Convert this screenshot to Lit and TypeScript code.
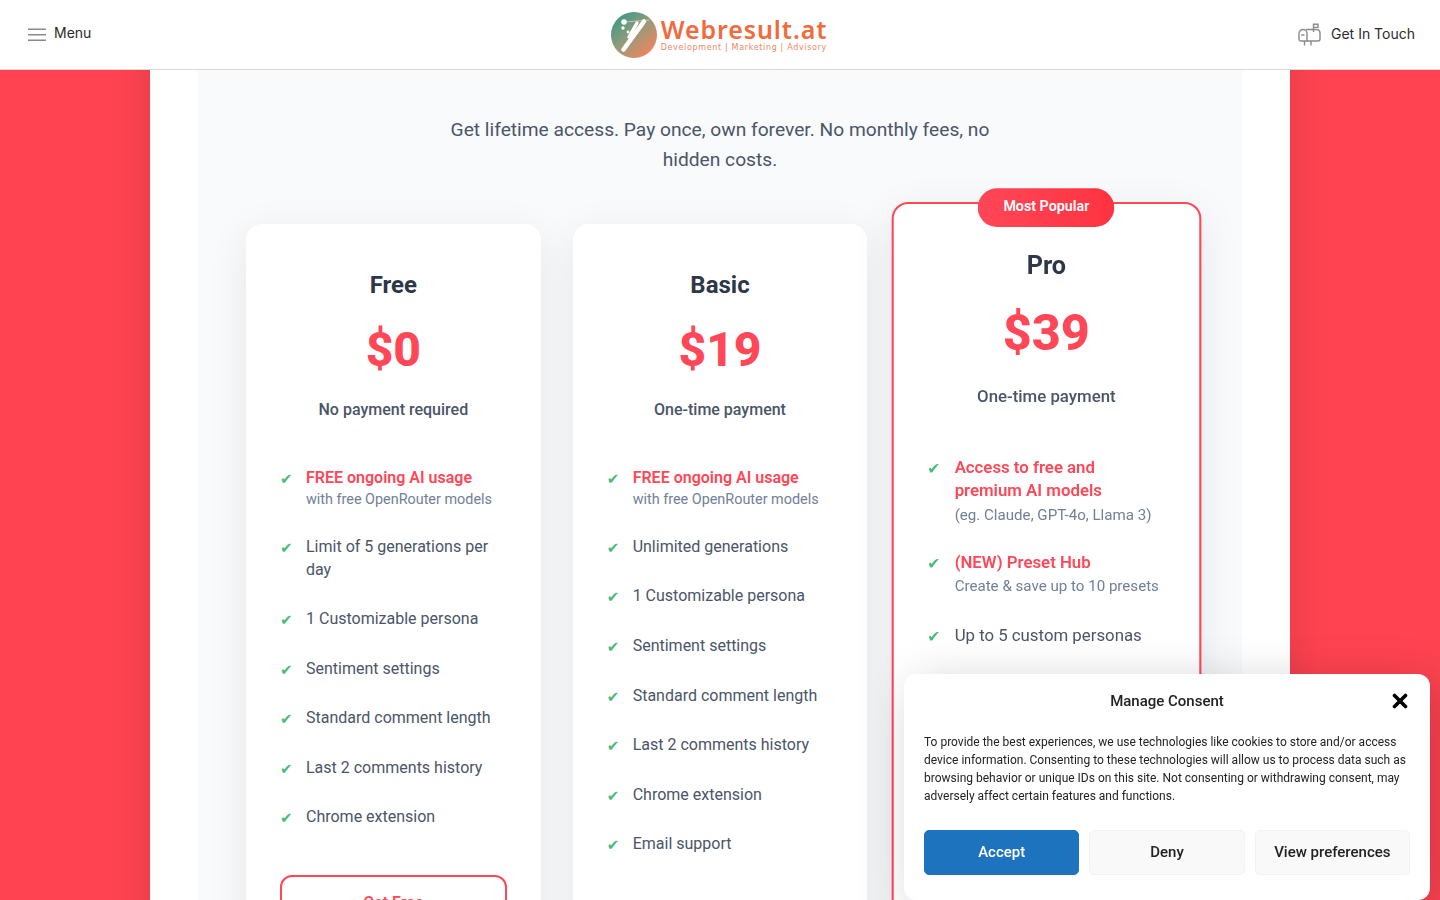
import { LitElement, html, css } from "lit";
import { customElement } from "lit/decorators.js";

type Feat = { t: string; hl?: boolean; sub?: string };
type Plan = { name: string; price: string; note: string; cta: string; popular?: boolean; feats: Feat[] };

const PLANS: Plan[] = [
  {
    name: "Free", price: "$0", note: "No payment required", cta: "Get Free",
    feats: [
      { t: "FREE ongoing AI usage", hl: true, sub: "with free OpenRouter models" },
      { t: "Limit of 5 generations per day" },
      { t: "1 Customizable persona" },
      { t: "Sentiment settings" },
      { t: "Standard comment length" },
      { t: "Last 2 comments history" },
      { t: "Chrome extension" },
    ],
  },
  {
    name: "Basic", price: "$19", note: "One-time payment", cta: "Get Basic",
    feats: [
      { t: "FREE ongoing AI usage", hl: true, sub: "with free OpenRouter models" },
      { t: "Unlimited generations" },
      { t: "1 Customizable persona" },
      { t: "Sentiment settings" },
      { t: "Standard comment length" },
      { t: "Last 2 comments history" },
      { t: "Chrome extension" },
      { t: "Email support" },
    ],
  },
  {
    name: "Pro", price: "$39", note: "One-time payment", cta: "Get Pro", popular: true,
    feats: [
      { t: "Access to free and premium AI models", hl: true, sub: "(eg. Claude, GPT-4o, Llama 3)" },
      { t: "(NEW) Preset Hub", hl: true, sub: "Create & save up to 10 presets" },
      { t: "Up to 5 custom personas" },
      { t: "Sentiment settings" },
      { t: "Standard comment length" },
      { t: "Last 5 comments history" },
      { t: "Chrome extension" },
    ],
  },
];

@customElement("app-root")
export class AppRoot extends LitElement {
  static styles = css`
    :host {
      display: block;
      position: relative;
      width: 1440px;
      height: 900px;
      overflow: hidden;
      background: #ff4351;
      font-family: Roboto, "Liberation Sans", sans-serif;
    }
    * { box-sizing: border-box; }
    .header {
      position: absolute;
      inset: 0 0 auto 0;
      z-index: 5;
      height: 70px;
      background: #fff;
      border-bottom: 1px solid #d9d9d9;
      display: grid;
      grid-template-columns: 1fr auto 1fr;
      align-items: center;
      padding: 0 25px 0 28px;
      font-family: Inter, Roboto, sans-serif;
      font-size: 14px;
      color: #2b2b2b;
    }
    .menu { display: flex; align-items: center; gap: 8px; margin-top: -5px; }
    .menu svg { margin-top: 5px; }
    .touch { display: flex; align-items: center; gap: 10px; justify-content: flex-end; margin-top: -1px; }
    .touch span { margin-top: -2px; }
    .logo { display: flex; align-items: center; gap: 4px; margin-left: -5px; }
    .wordmark { display: flex; flex-direction: column; margin-top: -1px; }
    .brand {
      font-family: "Noto Sans", "DejaVu Sans", sans-serif;
      font-weight: 600;
      font-size: 25px;
      line-height: 27px;
      letter-spacing: 0.9px;
      color: #ef6c3e;
    }
    .tag {
      font-family: "DejaVu Sans", sans-serif;
      font-size: 8px;
      line-height: 10px;
      letter-spacing: 0.66px;
      color: #ee8763;
    }
    .wrap {
      width: 1140px;
      min-height: 900px;
      margin: 0 auto;
      padding: 70px 48px 0;
      background: #fff;
      box-shadow: 0 0 40px rgba(0, 0, 0, 0.12);
    }
    .section {
      background: #f8fafc;
      padding: 45px 48px 60px;
    }
    .lead {
      max-width: 600px;
      margin: 0 auto 49px;
      text-align: center;
      font-size: 19.2px;
      line-height: 30px;
      color: #4a5568;
    }
    .grid {
      display: grid;
      grid-template-columns: repeat(3, 1fr);
      gap: 32px;
    }
    .card {
      position: relative;
      background: #fff;
      border-radius: 16px;
      padding: 47px 34px 34px;
      box-shadow: 0 10px 40px rgba(0, 0, 0, 0.08);
      height: 884px;
    }
    .card.popular {
      border: 2px solid #ff4757;
      padding: 45px 32px 32px;
      transform: scale(1.05);
    }
    .badge {
      position: absolute;
      top: -15.5px;
      left: 50%;
      transform: translateX(-50%);
      width: 130px;
      height: 37px;
      padding-bottom: 2px;
      border-radius: 19px;
      background: linear-gradient(90deg, #ff4757, #ff3341);
      color: #fff;
      font-size: 13.6px;
      font-weight: 600;
      display: flex;
      align-items: center;
      justify-content: center;
    }
    h3 {
      margin: 0;
      text-align: center;
      font-size: 24px;
      line-height: 28px;
      font-weight: 700;
      color: #2d3748;
    }
    .price {
      margin-top: 23px;
      text-align: center;
      font-size: 48px;
      line-height: 56px;
      font-weight: 800;
      color: #ff4757;
    }
    .popular .price { margin-top: 22px; }
    .note {
      margin-top: 20px;
      text-align: center;
      font-size: 16px;
      line-height: 24px;
      font-weight: 500;
      color: #4a5568;
    }
    .popular .note { margin-top: 21px; }
    ul { list-style: none; margin: 32px 0 0; padding: 0; }
    .popular ul { margin-top: 31px; }
    li {
      display: grid;
      grid-template-columns: 26px 1fr;
      padding: 13.4px 0;
      font-size: 16px;
      line-height: 22.8px;
      color: #4a5568;
    }
    .check {
      color: #48bb78;
      font-family: "DejaVu Sans", sans-serif;
      font-size: 15px;
      line-height: 24px;
      height: 22.8px;
    }
    .hl { display: block; color: #ff4757; font-weight: 600; line-height: 22px; }
    .sub { display: block; margin-top: 2.8px; font-size: 14.4px; line-height: 16.8px; color: #718096; }
    .popular .sub { margin-top: 5.2px; line-height: 14.7px; }
    .cta {
      display: block;
      margin-top: 32px;
      height: 56px;
      border: 2px solid #ff4757;
      border-radius: 12px;
      text-align: center;
      line-height: 52px;
      font-size: 16px;
      font-weight: 600;
      color: #ff4757;
    }
    .consent {
      position: absolute;
      z-index: 6;
      left: 904px;
      top: 674px;
      width: 526px;
      height: 226px;
      padding: 16px 20px 20px;
      background: #fff;
      border-radius: 12px;
      box-shadow: 10px 10px 50px rgba(0, 0, 0, 0.2);
      color: #222;
    }
    .c-head { display: flex; justify-content: center; position: relative; }
    .c-title { font-size: 15px; line-height: 22px; font-weight: 500; color: #222; }
    .close { position: absolute; right: 2px; top: 3px; }
    .c-text { margin: 21px 0 0; font-size: 12px; line-height: 18px; color: #222; }
    .btns { display: grid; grid-template-columns: repeat(3, 1fr); gap: 10px; margin-top: 25px; }
    .btn {
      height: 45px;
      padding-bottom: 2px;
      border-radius: 5px;
      background: #f9f9f9;
      border: 1px solid #f2f2f2;
      color: #222;
      font-size: 15px;
      font-weight: 500;
      display: flex;
      align-items: center;
      justify-content: center;
    }
    .btn.accept { background: #1e73be; border-color: #1e73be; color: #fff; }
  `;

  private logo() {
    return html`<svg width="46" height="46" viewBox="0 0 46 46" aria-hidden="true">
      <defs>
        <linearGradient id="lg" x1="0.15" y1="0.1" x2="0.85" y2="0.9">
          <stop offset="0" stop-color="#3f9a85" />
          <stop offset="0.5" stop-color="#9a9a78" />
          <stop offset="1" stop-color="#f0845f" />
        </linearGradient>
      </defs>
      <circle cx="23" cy="23" r="23" fill="url(#lg)" />
      <g stroke="#fff" stroke-linecap="round" fill="none">
        <path d="M12.5 37.5 L33 9.5" stroke-width="4.6" />
        <path d="M18 25 L26 11" stroke-width="3.4" />
        <path d="M14 10 L38 8" stroke-width="0.7" opacity="0.7" />
      </g>
      <circle cx="13" cy="10" r="2.8" fill="#fff" />
      <circle cx="12" cy="16" r="1.7" fill="#fff" />
      <circle cx="17" cy="20" r="1.4" fill="#fff" />
    </svg>`;
  }

  private plan(p: Plan) {
    return html`<div class="card ${p.popular ? "popular" : ""}">
      ${p.popular ? html`<div class="badge">Most Popular</div>` : ""}
      <h3>${p.name}</h3>
      <div class="price">${p.price}</div>
      <div class="note">${p.note}</div>
      <ul>
        ${p.feats.map(
          (f) => html`<li>
            <span class="check">✔</span>
            <span>
              <span class="${f.hl ? "hl" : ""}">${f.t}</span>
              ${f.sub ? html`<span class="sub">${f.sub}</span>` : ""}
            </span>
          </li>`
        )}
      </ul>
      <div class="cta">${p.cta}</div>
    </div>`;
  }

  render() {
    return html`
      <header class="header">
        <div class="menu">
          <svg width="18" height="14" viewBox="0 0 18 14" aria-hidden="true">
            <path d="M0 1.2H18M0 6.7H18M0 12.2H18" stroke="#8a8a8a" stroke-width="1.5" fill="none" />
          </svg>
          <span>Menu</span>
        </div>
        <div class="logo">
          ${this.logo()}
          <div class="wordmark">
            <span class="brand">Webresult.at</span>
            <span class="tag">Development | Marketing | Advisory</span>
          </div>
        </div>
        <div class="touch">
          <svg width="23" height="23" viewBox="0 0 23 23" fill="none" stroke="#8a8a8a" stroke-width="1.4" aria-hidden="true">
            <path d="M8 6.5H18.5a3.5 3.5 0 0 1 3.5 3.5v6a2 2 0 0 1-2 2H9" />
            <path d="M5 6.5a4 4 0 0 1 4 4V18H3a2 2 0 0 1-2-2v-5.5a4 4 0 0 1 4-4z" />
            <path d="M15.5 9V1.2h4.5v3.2h-4.5" />
            <path d="M3.2 12H6.5M6.5 18V22.5M13 18V22.5" />
          </svg>
          <span>Get In Touch</span>
        </div>
      </header>
      <main class="wrap">
        <section class="section">
          <p class="lead">Get lifetime access. Pay once, own forever. No monthly fees, no hidden costs.</p>
          <div class="grid">${PLANS.map((p) => this.plan(p))}</div>
        </section>
      </main>
      <aside class="consent">
        <div class="c-head">
          <span class="c-title">Manage Consent</span>
          <svg class="close" width="16" height="16" viewBox="0 0 16 16" aria-hidden="true">
            <path d="M2.5 2.5L13.5 13.5M13.5 2.5L2.5 13.5" stroke="#000" stroke-width="3.6" stroke-linecap="round" />
          </svg>
        </div>
        <p class="c-text">To provide the best experiences, we use technologies like cookies to store and/or access device information. Consenting to these technologies will allow us to process data such as browsing behavior or unique IDs on this site. Not consenting or withdrawing consent, may adversely affect certain features and functions.</p>
        <div class="btns">
          <div class="btn accept">Accept</div>
          <div class="btn">Deny</div>
          <div class="btn">View preferences</div>
        </div>
      </aside>
    `;
  }
}
